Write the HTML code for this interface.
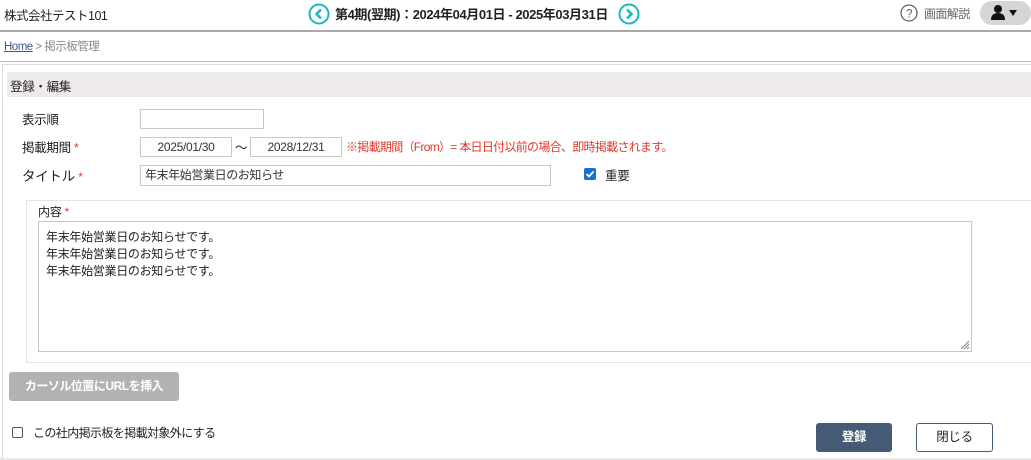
<!DOCTYPE html>
<html><head><meta charset="utf-8"><style>
*{box-sizing:border-box;margin:0;padding:0}
body{width:1031px;height:460px;overflow:hidden;background:#fff;font-family:"Liberation Sans","Noto Sans CJK JP",sans-serif;font-size:12.5px;color:#222;position:relative;letter-spacing:-0.3px}
.a{position:absolute;white-space:nowrap}
.in{position:absolute;border:1px solid #c8c8c8;background:#fff;font-size:12px;color:#333}
.r{color:#e03a2a}
</style></head><body>
<div class="a" style="left:4px;top:5px;font-size:12.5px;letter-spacing:-0.5px">株式会社テスト101</div>
<svg class="a" style="left:308px;top:3px" width="22" height="22"><circle cx="11" cy="11" r="9.5" fill="none" stroke="#1bb8c4" stroke-width="2"/><path d="M13 6.5 L8.5 11 L13 15.5" fill="none" stroke="#1bb8c4" stroke-width="2.6"/></svg>
<div class="a" style="left:335px;top:4px;font-size:13px;font-weight:bold;letter-spacing:-0.4px">第4期(翌期)：2024年04月01日 - 2025年03月31日</div>
<svg class="a" style="left:618px;top:3px" width="22" height="22"><circle cx="11" cy="11" r="9.5" fill="none" stroke="#1bb8c4" stroke-width="2"/><path d="M9 6.5 L13.5 11 L9 15.5" fill="none" stroke="#1bb8c4" stroke-width="2.6"/></svg>
<svg class="a" style="left:900px;top:4px" width="18" height="18"><circle cx="9" cy="9" r="8" fill="none" stroke="#666" stroke-width="1.3"/><text x="9" y="13.5" font-size="12" text-anchor="middle" fill="#666" font-family="Liberation Sans">?</text></svg>
<div class="a" style="left:924px;top:5px;font-size:12px;color:#666;letter-spacing:-0.6px">画面解説</div>
<div class="a" style="left:980px;top:1px;width:51px;height:24px;border-radius:12px;background:#d5d5d5"></div>
<svg class="a" style="left:990px;top:4px" width="34" height="18"><circle cx="8" cy="5" r="4" fill="#111"/><path d="M1 16 Q1 9 8 9 Q15 9 15 16Z" fill="#111"/><path d="M19 6 L27 6 L23 12Z" fill="#111"/></svg>
<div class="a" style="left:0;top:30px;width:1031px;height:2px;background:#aaa"></div>
<div class="a" style="left:4px;top:38px;font-size:11.5px;color:#888;letter-spacing:-0.5px"><span style="color:#3a5a8a;text-decoration:underline">Home</span> &gt; 掲示板管理</div>
<div class="a" style="left:0;top:61px;width:1031px;height:1px;background:#bbb"></div>
<div class="a" style="left:2px;top:64px;width:1029px;height:396px;border-left:1px solid #ddd;border-top:1px solid #ddd"></div>
<div class="a" style="left:7px;top:72px;width:1024px;height:25px;background:#eeeaea"></div>
<div class="a" style="left:10px;top:76px;font-size:12.5px">登録・編集</div>
<div class="a" style="left:22px;top:109px">表示順</div>
<div class="in" style="left:140px;top:109px;width:124px;height:20px"></div>
<div class="a" style="left:22px;top:137px">掲載期間 <span class="r">*</span></div>
<div class="in" style="left:140px;top:137px;width:92px;height:20px;text-align:center;line-height:18px">2025/01/30</div>
<div class="a" style="left:235px;top:137px">〜</div>
<div class="in" style="left:250px;top:137px;width:92px;height:20px;text-align:center;line-height:18px">2028/12/31</div>
<div class="a r" style="left:346px;top:138px;font-size:12px;letter-spacing:-0.7px">※掲載期間（From）= 本日日付以前の場合、即時掲載されます。</div>
<div class="a" style="left:22px;top:165px;font-size:13.5px">タイトル <span class="r" style="font-size:12px">*</span></div>
<div class="in" style="left:140px;top:165px;width:411px;height:21px;padding-left:4px;line-height:19px;letter-spacing:-0.4px">年末年始営業日のお知らせ</div>
<div class="a" style="left:584px;top:168px;width:12px;height:12px;background:#1a6fd0;border-radius:2px"></div>
<svg class="a" style="left:584px;top:168px" width="12" height="12"><path d="M2.5 6 L5 8.5 L9.5 3.5" fill="none" stroke="#fff" stroke-width="1.8"/></svg>
<div class="a" style="left:605px;top:165px">重要</div>
<div class="a" style="left:26px;top:200px;width:1010px;height:163px;border:1px solid #e4e4e4"></div>
<div class="a" style="left:38px;top:203px;font-size:12px">内容 <span class="r">*</span></div>
<div class="in" style="left:38px;top:221px;width:934px;height:131px;padding:7px 7px;font-size:12px;line-height:17px;color:#222;letter-spacing:-0.3px">年末年始営業日のお知らせです。<br>年末年始営業日のお知らせです。<br>年末年始営業日のお知らせです。</div>
<svg class="a" style="left:959px;top:339px" width="11" height="11"><path d="M10 2 L2 10 M10 5 L5 10 M10 8 L8 10" stroke="#888" stroke-width="1"/></svg>
<div class="a" style="left:9px;top:372px;width:170px;height:29px;background:#b2b2b2;border-radius:3px;color:#fff;font-weight:bold;font-size:12px;text-align:center;line-height:29px;letter-spacing:-0.5px">カーソル位置にURLを挿入</div>
<div class="a" style="left:12px;top:427px;width:11px;height:11px;border:1px solid #555;border-radius:2px"></div>
<div class="a" style="left:33px;top:424px;font-size:12px;letter-spacing:-0.6px">この社内掲示板を掲載対象外にする</div>
<div class="a" style="left:816px;top:423px;width:76px;height:29px;background:#455a75;border-radius:3px;color:#fff;font-weight:bold;text-align:center;line-height:29px">登録</div>
<div class="a" style="left:916px;top:423px;width:77px;height:29px;border:1px solid #455a75;border-radius:3px;text-align:center;line-height:27px">閉じる</div>
<div class="a" style="left:0;top:458px;width:1031px;height:2px;background:#e8e8e8"></div>
</body></html>
